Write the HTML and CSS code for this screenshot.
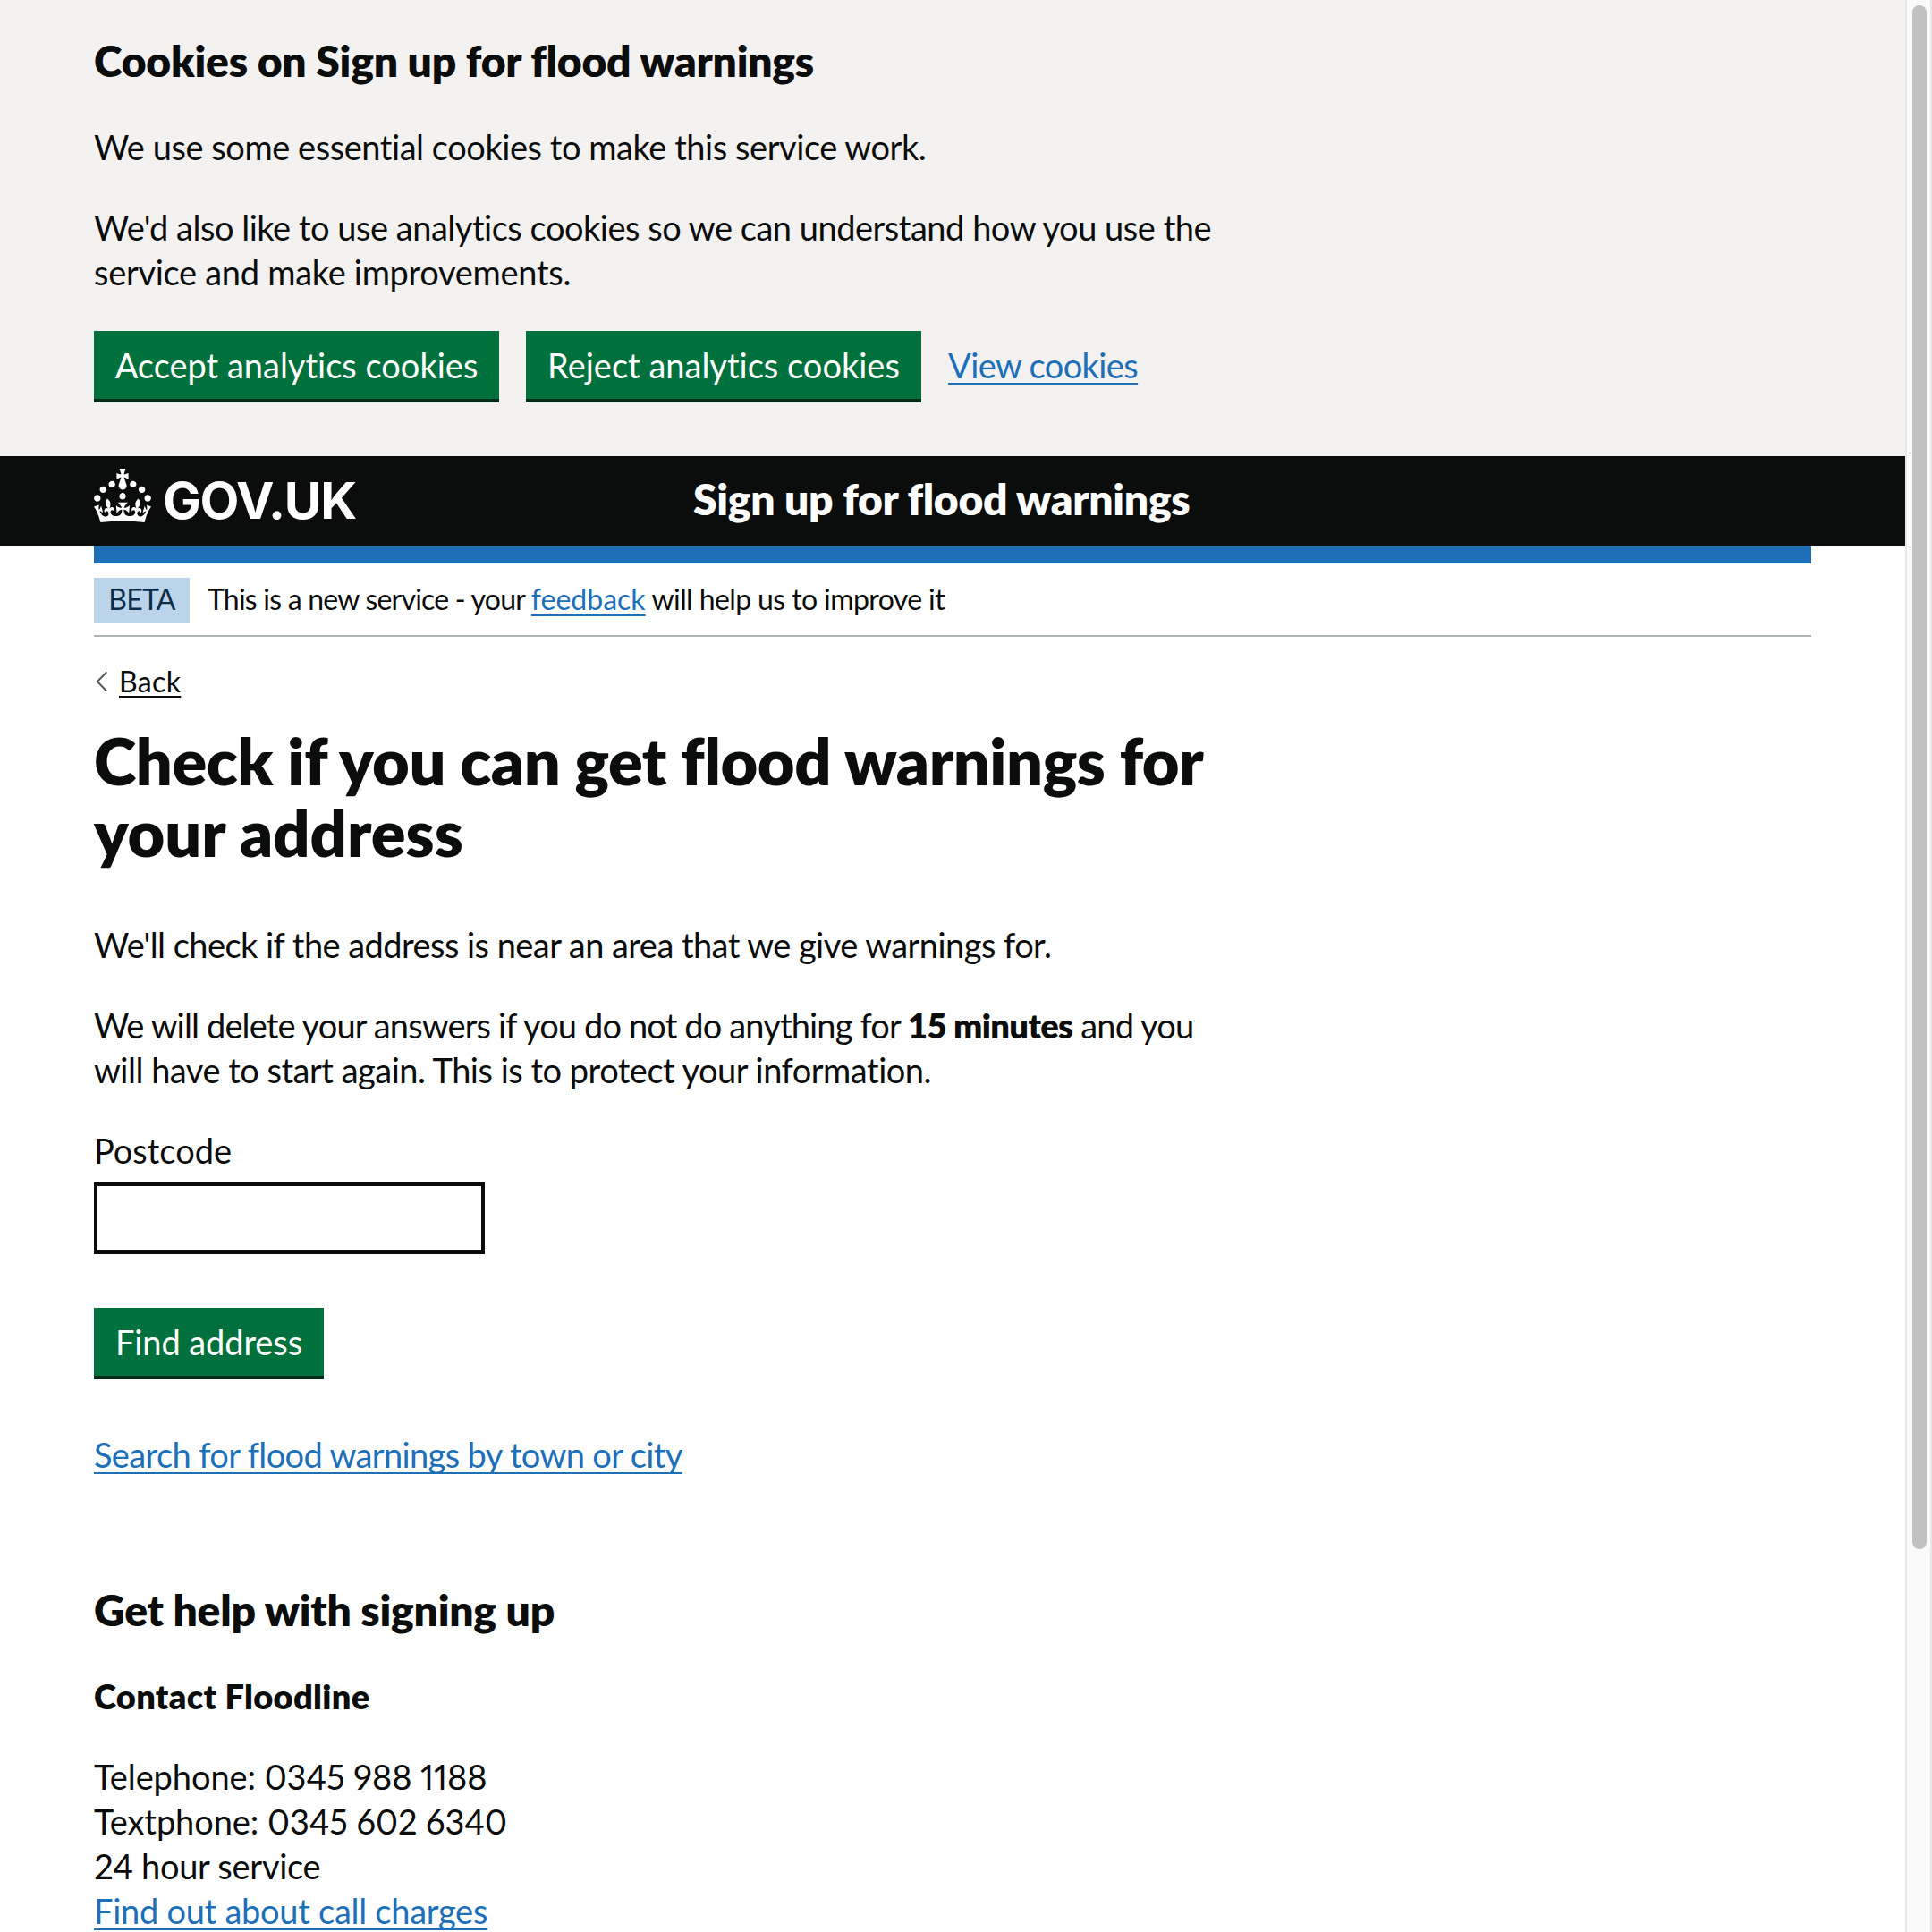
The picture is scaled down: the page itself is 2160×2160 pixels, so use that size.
FILE: index.html
```html
<!DOCTYPE html>
<html lang="en">
<head>
<meta charset="utf-8">
<title>Check if you can get flood warnings for your address</title>
<link rel="stylesheet" href="styles.css">
</head>
<body>
<div class="page">
  <section class="cookie-banner">
    <h2 class="heading-m">Cookies on Sign up for flood warnings</h2>
    <div class="cookie-copy">
      <p class="body cookie-one">We use some essential cookies to make this service work.</p>
      <p class="body cookie-two">We'd also like to use analytics cookies so we can understand how you use the<br><span class="cookie-end">service and make improvements.</span></p>
    </div>
    <div class="button-group">
      <button class="button button-accept" type="button">Accept analytics cookies</button>
      <button class="button button-reject" type="button">Reject analytics cookies</button>
      <a class="link body view-link">View cookies</a>
    </div>
  </section>

  <header class="header">
    <div class="logo">
      <svg class="crown" viewBox="0 0 32 30" aria-hidden="true"><path fill="currentColor" d="M22.6 10.4c-1 .4-2-.1-2.4-1-.4-.9.1-2 1-2.4.9-.4 2 .1 2.4 1s-.1 2-1 2.4m-5.9 6.7c-.9.4-2-.1-2.4-1-.4-.9.1-2 1-2.4.9-.4 2 .1 2.4 1s-.1 2-1 2.4m10.8-3.7c-1 .4-2-.1-2.4-1-.4-.9.1-2 1-2.4.9-.4 2 .1 2.4 1s0 2-1 2.4m3.3 4.8c-1 .4-2-.1-2.4-1-.4-.9.1-2 1-2.4.9-.4 2 .1 2.4 1s-.1 2-1 2.4M17 4.7l2.3 1.2V2.5l-2.3.7-.2-.2.9-3h-3.4l.9 3-.2.2c-.1.1-2.3-.7-2.3-.7v3.4L15 4.7c.1.1.1.2.2.2l-1.3 4c-.1.2-.1.4-.1.6 0 1.1.8 2 1.9 2.2h.7c1-.2 1.9-1.1 1.9-2.1 0-.2 0-.4-.1-.6l-1.3-4c-.1-.2 0-.2.1-.3m-7.6 5.7c.9.4 2-.1 2.4-1 .4-.9-.1-2-1-2.4-.9-.4-2 .1-2.4 1s0 2 1 2.4m-5 3c.9.4 2-.1 2.4-1 .4-.9-.1-2-1-2.4-.9-.4-2 .1-2.4 1s.1 2 1 2.4m-3.2 4.8c.9.4 2-.1 2.4-1 .4-.9-.1-2-1-2.4-.9-.4-2 .1-2.4 1s0 2 1 2.4m14.8 11c4.4 0 8.6.3 12.3.8 1.1-4.5 2.4-7 3.7-8.8l-2.5-.9c.2 1.3.3 1.9 0 2.7-.4-.4-.8-1.1-1.1-2.3l-1.2 4c.7-.5 1.3-.8 2-.9-1.1 2.5-2.6 3.1-3.5 3-1.1-.2-1.7-1.2-1.5-2.1.3-1.2 1.5-1.5 2.1-.1 1.1-2.3-.8-3-2-2.3 1.9-1.9 2.1-3.5.6-5.6-2.1 1.6-2.1 3.2-1.2 5.5-1.2-1.4-3.2-.6-2.5 1.6.9-1.4 2.1-.5 1.9.8-.2 1.1-1.7 2.1-3.5 1.9-2.7-.2-2.9-2.1-2.9-3.6.7-.1 1.9.5 2.9 1.9l.4-4.3c-1.1 1.1-2.1 1.4-3.2 1.4.4-1.2 2.1-3 2.1-3h-5.4s1.7 1.9 2.1 3c-1.1 0-2.1-.2-3.2-1.4l.4 4.3c1-1.4 2.2-2 2.9-1.9-.1 1.5-.2 3.4-2.9 3.6-1.9.2-3.4-.8-3.5-1.9-.2-1.3 1-2.2 1.9-.8.7-2.3-1.2-3-2.5-1.6.9-2.2.9-3.9-1.2-5.5-1.5 2-1.3 3.7.6 5.6-1.2-.7-3.1 0-2 2.3.6-1.4 1.8-1.1 2.1.1.2.9-.3 1.9-1.5 2.1-.9.2-2.4-.5-3.5-3 .6 0 1.2.3 2 .9l-1.2-4c-.3 1.1-.7 1.9-1.1 2.3-.3-.8-.2-1.4 0-2.7l-2.9.9C1.3 23 2.6 25.5 3.7 30c3.7-.5 7.9-.8 12.3-.8"/></svg>
      <span class="wordmark">GOV.UK</span>
    </div>
    <span class="service-name">Sign up for flood warnings</span>
  </header>

  <div class="container">
    <div class="phase-banner">
      <strong class="tag">BETA</strong>
      <span class="phase-text"><span class="phase-lead">This is a new service - your </span><a class="link phase-link">feedback</a> will help us to improve it</span>
    </div>

    <a class="back-link">
      <svg class="chevron" viewBox="0 0 14 24" aria-hidden="true"><path d="M12.3 1.2 1.9 12l10.4 10.8" fill="none" stroke="#505a5f" stroke-width="2"/></svg>
      <span class="back-text">Back</span>
    </a>

    <main class="main">
      <h1 class="heading-xl">Check if you can get flood warnings for<br><span class="xl-end">your address</span></h1>
      <p class="body intro">We'll check if the address is near an area that we give warnings for.</p>
      <p class="body notice"><span class="notice-lead">We will delete your answers if you do not do anything for <strong class="strong">15 minutes</strong> and you</span><br>will have to start again. This is to protect your information.</p>
      <form class="form">
        <label class="body label" for="postcode">Postcode</label>
        <input class="input" id="postcode" type="text">
        <button class="button button-find" type="button">Find address</button>
      </form>
      <a class="link body search-link">Search for flood warnings by town or city</a>
      <h2 class="heading-m help-heading">Get help with signing up</h2>
      <h3 class="heading-s">Contact Floodline</h3>
      <p class="body contact"><span class="num">Telephone: 0345 988 1188</span><br><span class="num">Textphone: 0345 602 6340</span><br>24 hour service<br><a class="link">Find out about call charges</a></p>
    </main>
  </div>
</div>
<div class="scrollbar"><div class="thumb"></div></div>
</body>
</html>
```
FILE: styles.css
```css
* { box-sizing: border-box; }
html { overflow: hidden; }
body {
  margin: 0;
  height: 2160px;
  display: flex;
  overflow: hidden;
  background: #fff;
  color: #0b0c0c;
  font-family: Lato, "Liberation Sans", sans-serif;
  font-variant-ligatures: none;
}
h1, h2, h3, p { margin: 0; }

.page { width: 2130px; height: 2160px; overflow: hidden; }
.body { font-size: 38px; line-height: 50px; letter-spacing: -0.5px; white-space: nowrap; }
.heading-m { font-size: 48px; line-height: 60px; font-weight: 800; letter-spacing: -0.25px; }
.heading-s { font-size: 38px; line-height: 50px; font-weight: 800; letter-spacing: 0.3px; }
.heading-xl { font-size: 72px; line-height: 80px; font-weight: 800; letter-spacing: -0.43px; white-space: nowrap; }
.xl-end { letter-spacing: 0; }
.strong { font-weight: 800; letter-spacing: -0.6px; }
.link {
  color: #1d70b8;
  text-decoration: underline;
  text-decoration-thickness: 2px;
  text-underline-offset: 5px;
  text-decoration-skip-ink: none;
}

.cookie-banner { height: 510px; padding: 38px 105px 0; background: #f3f2f1; }
.cookie-copy { display: flex; flex-direction: column; gap: 40px; margin-top: 41px; }
.cookie-one { letter-spacing: -0.45px; }
.cookie-two { letter-spacing: -0.48px; }
.cookie-end { letter-spacing: -0.3px; }
.button-group { display: flex; gap: 30px; margin-top: 41px; }
.button {
  height: 76px;
  margin: 0 0 4px;
  padding: 0;
  border: 0;
  background: #00703c;
  box-shadow: 0 4px 0 #002d18;
  color: #fff;
  font: 400 38px/50px Lato, "Liberation Sans", sans-serif;
  font-variant-ligatures: none;
  letter-spacing: 0;
  white-space: nowrap;
}
.button-accept { width: 453px; }
.button-reject { width: 442px; }
.button-find { width: 257px; margin-top: 60px; letter-spacing: -0.1px; }
.view-link { padding-top: 13px; letter-spacing: -0.6px; }

.header {
  display: flex;
  align-items: flex-start;
  height: 100px;
  padding: 14px 105px 0;
  background: #0b0c0c;
  color: #fff;
}
.logo { display: flex; width: 670px; }
.crown { width: 64px; height: 60px; }
.wordmark { margin: 7px 0 0 13px; font: 700 57px/58px Inter, "Liberation Sans", sans-serif; letter-spacing: -1.2px; }
.service-name { padding-top: 4px; font-size: 48px; line-height: 60px; font-weight: 800; letter-spacing: -0.3px; }

.container { width: 1920px; margin-left: 105px; border-top: 20px solid #1d70b8; }
.phase-banner { display: flex; height: 82px; padding-top: 16px; border-bottom: 2px solid #b1b4b6; }
.tag {
  width: 107px;
  height: 50px;
  background: #bbd4ea;
  color: #0c2d4a;
  font-size: 32px;
  font-weight: 400;
  line-height: 48px;
  letter-spacing: -0.7px;
  text-align: center;
}
.phase-text { margin-left: 20px; font-size: 32px; line-height: 48px; letter-spacing: -0.6px; white-space: nowrap; }
.phase-lead { letter-spacing: -0.78px; }
.phase-link { letter-spacing: 0; }
.back-link { display: flex; margin-top: 30px; height: 40px; }
.chevron { width: 14px; height: 24px; margin: 8px 0 0 2px; }
.back-text {
  margin-left: 12px;
  font-size: 32px;
  line-height: 40px;
  letter-spacing: 0.35px;
  text-decoration: underline;
  text-decoration-thickness: 2px;
  text-underline-offset: 4px;
}
.heading-xl { margin-top: 28px; }
.intro { margin-top: 61px; letter-spacing: -0.55px; }
.notice { margin-top: 40px; }
.notice-lead { letter-spacing: -0.86px; }
.form { display: flex; flex-direction: column; align-items: flex-start; margin-top: 40px; }
.label { letter-spacing: 0; }
.input { width: 437px; height: 80px; margin: 11px 0 0; padding: 0 8px; border: 4px solid #0b0c0c; border-radius: 0; background: #fff; font-size: 38px; }
.search-link { display: block; margin-top: 59px; letter-spacing: -0.63px; }
.help-heading { margin-top: 119px; }
.heading-s { margin-top: 41px; }
.contact { margin-top: 40px; letter-spacing: -0.27px; }
.num { font-variant-numeric: proportional-nums; letter-spacing: -0.07px; }

.scrollbar { width: 30px; height: 2160px; padding: 6px 4px 0 6px; border: solid #e8e8e8; border-width: 0 2px; background: #fafafa; }
.thumb { width: 16px; height: 1726px; border-radius: 8px; background: #c1c1c1; }
```
